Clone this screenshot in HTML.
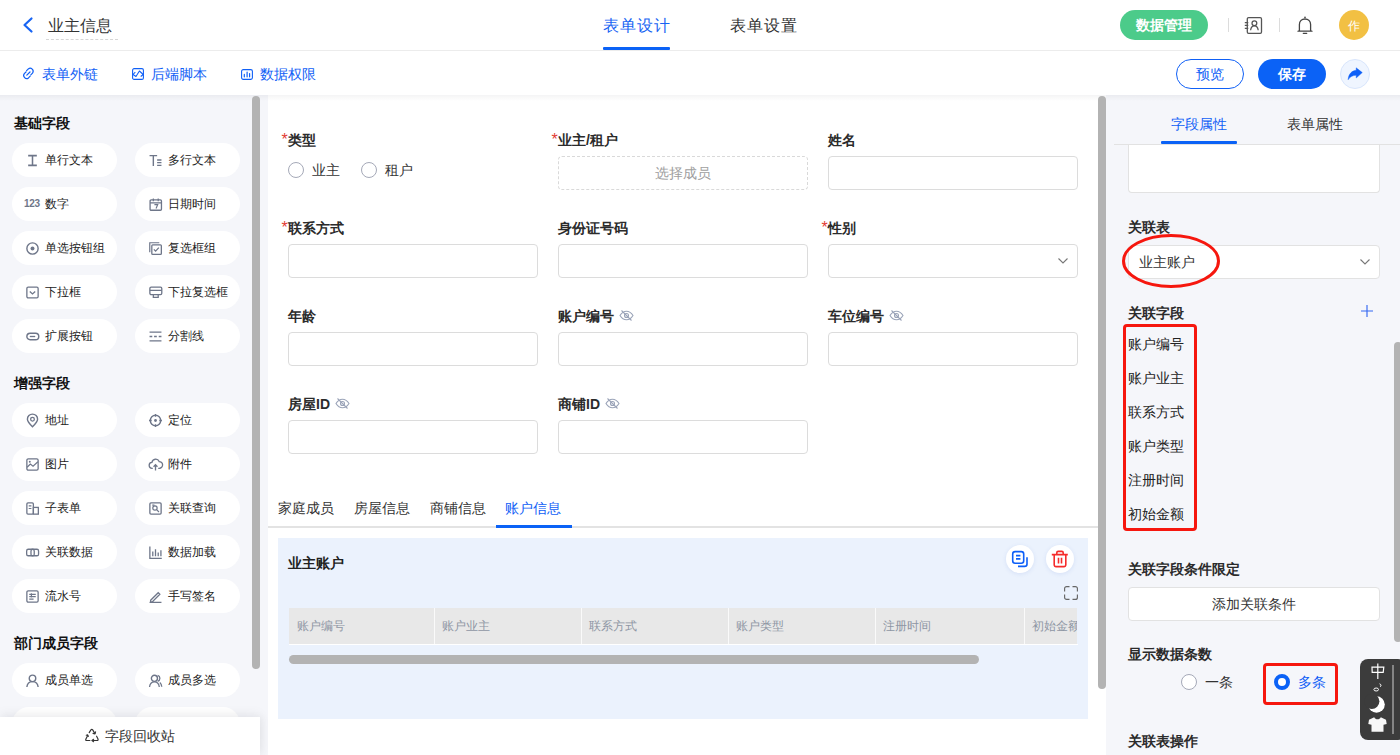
<!DOCTYPE html>
<html><head><meta charset="utf-8">
<style>
*{box-sizing:border-box;margin:0;padding:0}
html,body{width:1400px;height:755px;overflow:hidden;background:#fff;font-family:"Liberation Sans",sans-serif;color:#333}
.a{position:absolute}
.t{position:absolute;white-space:nowrap;line-height:1}
svg{position:absolute;overflow:visible}
/* header */
#hdr{left:0;top:0;width:1400px;height:51px;border-bottom:1px solid #ececec;background:#fff}
#tb{left:0;top:51px;width:1400px;height:44px;background:#fff}
#lp{left:0;top:95px;width:268px;height:660px;background:#f5f6fa}
#cv{left:268px;top:95px;width:838px;height:660px;background:#fff}
#rp{left:1106px;top:95px;width:294px;height:660px;background:#f5f6fa}
.shadow{left:0;top:95px;width:1400px;height:6px;background:linear-gradient(rgba(0,0,20,0.045),rgba(0,0,20,0))}
.sb{background:#b3b3b3;border-radius:4px}
.pill{position:absolute;width:105px;height:34px;border-radius:17px;background:#fff}
.pill .t{font-size:12px;color:#222;top:11px;left:33px}
.pill svg{left:14px;top:10px}
.sec{position:absolute;left:14px;font-size:14px;font-weight:bold;color:#111;line-height:1}
.lbl{position:absolute;font-size:14px;font-weight:bold;color:#2b2b2b;line-height:1;white-space:nowrap}
.lbl i{font-style:normal;color:#e23b33;font-weight:normal;position:absolute;left:-6.5px;top:-1px;font-size:16px}
.inp{position:absolute;width:250px;height:34px;border:1px solid #dcdcdc;border-radius:4px;background:#fff}
</style></head><body>
<div id="hdr" class="a"></div>
<div id="tb" class="a"></div>
<div id="lp" class="a"></div>
<div id="cv" class="a"></div>
<div id="rp" class="a"></div>
<div class="a shadow"></div>

<!-- HEADER -->
<svg style="left:22px;top:17px" width="12" height="16" viewBox="0 0 12 16"><path d="M9.5 1.5 L2.5 8 L9.5 14.5" fill="none" stroke="#1764f3" stroke-width="2.2" stroke-linecap="round" stroke-linejoin="round"/></svg>
<div class="t" style="left:48px;top:18px;font-size:16px;color:#333">业主信息</div>
<div class="a" style="left:46px;top:39px;width:72px;height:0;border-top:1px dashed #d6d6d6"></div>
<div class="t" style="left:603px;top:18px;font-size:16px;color:#1764f3;letter-spacing:1px">表单设计</div>
<div class="a" style="left:603px;top:47px;width:67px;height:3px;background:#0b62f6;border-radius:1px"></div>
<div class="t" style="left:730px;top:18px;font-size:16px;color:#333;letter-spacing:1px">表单设置</div>
<div class="a" style="left:1120px;top:10px;width:88px;height:30px;border-radius:15px;background:#4ccb8a"></div>
<div class="t" style="left:1136px;top:18px;font-size:14px;color:#fff;font-weight:bold">数据管理</div>
<div class="a" style="left:1228px;top:18px;width:1px;height:14px;background:#dcdcdc"></div>
<svg style="left:1244px;top:17px" width="19" height="17" viewBox="0 0 19 17"><rect x="3.3" y="0.6" width="14.2" height="15.8" rx="1.3" fill="none" stroke="#555" stroke-width="1.3"/><path d="M0.8 5.6h3.5M0.8 8.4h3.5M0.8 11.3h3.5" stroke="#555" stroke-width="1.2"/><circle cx="10.4" cy="6.2" r="2.4" fill="none" stroke="#555" stroke-width="1.25"/><path d="M6.6 13.2 C6.9 10.4 8.5 8.8 10.4 8.8 S13.9 10.4 14.2 13.2" fill="none" stroke="#555" stroke-width="1.25"/></svg>
<div class="a" style="left:1279px;top:18px;width:1px;height:14px;background:#dcdcdc"></div>
<svg style="left:1297px;top:16px" width="16" height="19" viewBox="0 0 16 19"><circle cx="8" cy="1.3" r="0.85" fill="#444"/><path d="M2.4 14.8 V8.6 C2.4 5.2 4.8 3 8 3 C11.2 3 13.6 5.2 13.6 8.6 V14.8 C14.2 14.9 14.8 15 15 15.2 H1 C1.2 15 1.8 14.9 2.4 14.8 Z" fill="none" stroke="#444" stroke-width="1.3" stroke-linejoin="round"/><path d="M6.3 17.3 H9.7" stroke="#444" stroke-width="1.3" stroke-linecap="round"/></svg>
<div class="a" style="left:1339px;top:10px;width:30px;height:30px;border-radius:50%;background:#f2c043"></div>
<div class="t" style="left:1348px;top:19.5px;font-size:12px;color:#fff">作</div>
<!-- LEFT PANEL -->
<div class="sec" style="top:116px">基础字段</div>
<div class="pill" style="left:12px;top:143px"><svg width="13" height="13" viewBox="0 0 12 12" style="left:13.5px;top:10.5px"><path d="M2 1.5h8M2 10.5h8M6 1.5v9" stroke="#6e7689" stroke-width="1.4" fill="none"/></svg><div class="t">单行文本</div></div>
<div class="pill" style="left:135px;top:143px"><svg width="13" height="13" viewBox="0 0 12 12" style="left:13.5px;top:10.5px"><path d="M0.5 1.5h7M4 1.5v9.5M7.5 5.5h4M7.5 8h4M7.5 10.5h4" stroke="#6e7689" stroke-width="1.3" fill="none"/></svg><div class="t">多行文本</div></div>
<div class="pill" style="left:12px;top:187px"><svg width="13" height="13" viewBox="0 0 12 12" style="left:13.5px;top:10.5px"></svg><div class="t">数字</div><div class="t" style="left:12px;top:11.5px;font-size:10px;font-weight:bold;color:#6e7689;font-family:'Liberation Sans',sans-serif;letter-spacing:-0.3px">123</div></div>
<div class="pill" style="left:135px;top:187px"><svg width="13" height="13" viewBox="0 0 12 12" style="left:13.5px;top:10.5px"><rect x="1" y="1.8" width="10.5" height="9.5" rx="1" fill="none" stroke="#6e7689" stroke-width="1.2"/><path d="M1 4.5h10.5M4 0.5v2.5M8.5 0.5v2.5M5 6.2h3l-1.5 3.5" stroke="#6e7689" stroke-width="1.1" fill="none"/></svg><div class="t">日期时间</div></div>
<div class="pill" style="left:12px;top:231px"><svg width="13" height="13" viewBox="0 0 12 12" style="left:13.5px;top:10.5px"><circle cx="6" cy="6" r="5.2" fill="none" stroke="#6e7689" stroke-width="1.3"/><circle cx="6" cy="6" r="1.8" fill="#6e7689"/></svg><div class="t">单选按钮组</div></div>
<div class="pill" style="left:135px;top:231px"><svg width="13" height="13" viewBox="0 0 12 12" style="left:13.5px;top:10.5px"><path d="M0.7 9.5V0.7h8.8" fill="none" stroke="#6e7689" stroke-width="1.1"/><rect x="2.6" y="2.6" width="8.8" height="8.8" rx="0.8" fill="none" stroke="#6e7689" stroke-width="1.2"/><path d="M4.5 6.8l1.6 1.6 3-3.2" fill="none" stroke="#6e7689" stroke-width="1.2"/></svg><div class="t">复选框组</div></div>
<div class="pill" style="left:12px;top:275px"><svg width="13" height="13" viewBox="0 0 12 12" style="left:13.5px;top:10.5px"><rect x="0.8" y="1" width="10.4" height="10" rx="1.2" fill="none" stroke="#6e7689" stroke-width="1.2"/><path d="M3.5 5l2.5 2.3 2.5-2.3" fill="none" stroke="#6e7689" stroke-width="1.2"/></svg><div class="t">下拉框</div></div>
<div class="pill" style="left:135px;top:275px"><svg width="13" height="13" viewBox="0 0 12 12" style="left:13.5px;top:10.5px"><rect x="0.8" y="1" width="11" height="7" rx="1.2" fill="none" stroke="#6e7689" stroke-width="1.2"/><path d="M0.8 4h11M4 8v2.5h4.5V8" fill="none" stroke="#6e7689" stroke-width="1.2"/></svg><div class="t">下拉复选框</div></div>
<div class="pill" style="left:12px;top:319px"><svg width="13" height="13" viewBox="0 0 12 12" style="left:13.5px;top:10.5px"><rect x="0.8" y="3" width="11" height="6" rx="3" fill="none" stroke="#6e7689" stroke-width="1.3"/><path d="M3.5 6h5" stroke="#6e7689" stroke-width="1.2"/></svg><div class="t">扩展按钮</div></div>
<div class="pill" style="left:135px;top:319px"><svg width="13" height="13" viewBox="0 0 12 12" style="left:13.5px;top:10.5px"><path d="M0.5 2h11M0.5 6h2.5M4.7 6h2.5M9 6h2.5M0.5 10h11" stroke="#6e7689" stroke-width="1.2" fill="none"/></svg><div class="t">分割线</div></div>
<div class="sec" style="top:376px">增强字段</div>
<div class="pill" style="left:12px;top:403px"><svg width="13" height="13" viewBox="0 0 12 12" style="left:13.5px;top:10.5px"><path d="M6 11.8C3 8.8 1.3 6.6 1.3 4.8a4.7 4.7 0 0 1 9.4 0c0 1.8-1.7 4-4.7 7z" fill="none" stroke="#6e7689" stroke-width="1.3"/><circle cx="6" cy="4.8" r="1.7" fill="none" stroke="#6e7689" stroke-width="1.2"/></svg><div class="t">地址</div></div>
<div class="pill" style="left:135px;top:403px"><svg width="13" height="13" viewBox="0 0 12 12" style="left:13.5px;top:10.5px"><circle cx="6" cy="6" r="4.8" fill="none" stroke="#6e7689" stroke-width="1.3"/><circle cx="6" cy="6" r="1.3" fill="#6e7689"/><path d="M6 0v2.5M6 9.5V12M0 6h2.5M9.5 6H12" stroke="#6e7689" stroke-width="1.2"/></svg><div class="t">定位</div></div>
<div class="pill" style="left:12px;top:447px"><svg width="13" height="13" viewBox="0 0 12 12" style="left:13.5px;top:10.5px"><rect x="0.8" y="0.8" width="10.4" height="10.4" rx="1.3" fill="none" stroke="#6e7689" stroke-width="1.2"/><path d="M1 8.5l3-3 2.5 2 4.5-4" fill="none" stroke="#6e7689" stroke-width="1.1"/><circle cx="3.5" cy="3.5" r=".9" fill="#6e7689"/></svg><div class="t">图片</div></div>
<div class="pill" style="left:135px;top:447px"><svg width="13" height="13" viewBox="0 0 12 12" style="left:13.5px;top:10.5px"><path d="M3.5 9.5H3a2.7 2.7 0 0 1-.3-5.4A3.5 3.5 0 0 1 9.4 3.3 2.6 2.6 0 0 1 9.5 9.5H8.5" fill="none" stroke="#6e7689" stroke-width="1.2"/><path d="M6 11.5V6.2M4.2 8l1.8-1.8L7.8 8" fill="none" stroke="#6e7689" stroke-width="1.2"/></svg><div class="t">附件</div></div>
<div class="pill" style="left:12px;top:491px"><svg width="13" height="13" viewBox="0 0 12 12" style="left:13.5px;top:10.5px"><rect x="0.8" y="0.8" width="6" height="10.4" rx="1" fill="none" stroke="#6e7689" stroke-width="1.2"/><rect x="6.8" y="5" width="4.6" height="6.2" fill="none" stroke="#6e7689" stroke-width="1.2"/><path d="M2.5 3.5h2.5M2.5 6h2.5" stroke="#6e7689" stroke-width="1.1"/></svg><div class="t">子表单</div></div>
<div class="pill" style="left:135px;top:491px"><svg width="13" height="13" viewBox="0 0 12 12" style="left:13.5px;top:10.5px"><rect x="0.8" y="0.8" width="10.4" height="10.4" rx="1" fill="none" stroke="#6e7689" stroke-width="1.2"/><circle cx="5.5" cy="5.5" r="2" fill="none" stroke="#6e7689" stroke-width="1.1"/><path d="M7 7l2.2 2.2M3 2.8h2" stroke="#6e7689" stroke-width="1.1"/></svg><div class="t">关联查询</div></div>
<div class="pill" style="left:12px;top:535px"><svg width="13" height="13" viewBox="0 0 12 12" style="left:13.5px;top:10.5px"><rect x="0.6" y="3" width="7" height="6" rx="1.5" fill="none" stroke="#6e7689" stroke-width="1.2"/><rect x="4.6" y="3" width="7" height="6" rx="1.5" fill="none" stroke="#6e7689" stroke-width="1.2"/></svg><div class="t">关联数据</div></div>
<div class="pill" style="left:135px;top:535px"><svg width="13" height="13" viewBox="0 0 12 12" style="left:13.5px;top:10.5px"><path d="M0.8 0.5v11h11M3.5 9.5V5M6 9.5V3M8.5 9.5V6M11 9.5V4" stroke="#6e7689" stroke-width="1.2" fill="none"/></svg><div class="t">数据加载</div></div>
<div class="pill" style="left:12px;top:579px"><svg width="13" height="13" viewBox="0 0 12 12" style="left:13.5px;top:10.5px"><rect x="0.8" y="0.8" width="10.4" height="10.4" rx="1.2" fill="none" stroke="#6e7689" stroke-width="1.2"/><path d="M3 4h6M3 6.2h6M3 8.4h4M5 3v4" stroke="#6e7689" stroke-width="1.1" fill="none"/></svg><div class="t">流水号</div></div>
<div class="pill" style="left:135px;top:579px"><svg width="13" height="13" viewBox="0 0 12 12" style="left:13.5px;top:10.5px"><path d="M1.5 9.5L8.5 2.5l1.5 1.5-7 7H1.5zM0.5 11.5h11" stroke="#6e7689" stroke-width="1.2" fill="none"/></svg><div class="t">手写签名</div></div>
<div class="sec" style="top:636px">部门成员字段</div>
<div class="pill" style="left:12px;top:663px"><svg width="13" height="13" viewBox="0 0 12 12" style="left:13.5px;top:10.5px"><circle cx="6" cy="4" r="3" fill="none" stroke="#6e7689" stroke-width="1.3"/><path d="M0.8 12c.3-3.2 2.4-5 5.2-5s4.9 1.8 5.2 5" fill="none" stroke="#6e7689" stroke-width="1.3"/></svg><div class="t">成员单选</div></div>
<div class="pill" style="left:135px;top:663px"><svg width="13" height="13" viewBox="0 0 12 12" style="left:13.5px;top:10.5px"><circle cx="5" cy="4" r="2.8" fill="none" stroke="#6e7689" stroke-width="1.3"/><path d="M0.5 12c.3-3 2-4.7 4.5-4.7s4.2 1.7 4.5 4.7M8 1.3a2.8 2.8 0 0 1 0 5.4M10 7.8c1 .8 1.6 2.2 1.8 4" fill="none" stroke="#6e7689" stroke-width="1.2"/></svg><div class="t">成员多选</div></div>
<div class="pill" style="left:12px;top:707px"><svg width="13" height="13" viewBox="0 0 12 12" style="left:13.5px;top:10.5px"></svg><div class="t">部门单选</div></div>
<div class="pill" style="left:135px;top:707px"><svg width="13" height="13" viewBox="0 0 12 12" style="left:13.5px;top:10.5px"></svg><div class="t">部门多选</div></div>
<div class="a sb" style="left:252px;top:96px;width:8px;height:573px"></div>
<div class="a" style="left:0;top:717px;width:260px;height:38px;background:#fff;box-shadow:0 -3px 12px rgba(0,0,30,0.06),3px 0 8px rgba(0,0,30,0.04)"></div>
<svg style="left:85px;top:729px" width="14" height="13" viewBox="0 0 14 13"><path d="M4.2 3.6 L5.9 0.9 Q6.8 -0.2 7.7 0.9 L9.8 4.4 M11.6 7.2 L13 10 Q13.5 11.5 12 11.5 H7.2 M4.9 11.5 H1.8 Q0.2 11.5 0.9 10 L2.7 6.4" fill="none" stroke="#333" stroke-width="1.15" stroke-linecap="round"/><path d="M10.6 2.8 L10 4.9 L8 4.4 M8.6 10.3 L7 11.5 L8.6 12.7 M1.3 6.3 L2.7 5.9 L3.3 7.5" fill="none" stroke="#333" stroke-width="1.1" stroke-linecap="round" stroke-linejoin="round"/></svg>
<div class="t" style="left:105px;top:729px;font-size:14px;color:#333">字段回收站</div>
<!-- CANVAS -->
<div class="lbl" style="left:288px;top:133px"><i>*</i>类型</div>
<div class="lbl" style="left:558px;top:133px"><i>*</i>业主/租户</div>
<div class="lbl" style="left:828px;top:133px">姓名</div>
<div class="a" style="left:288px;top:162px;width:16px;height:16px;border-radius:50%;border:1px solid #a5a9b8;background:#fff"></div>
<div class="t" style="left:312px;top:163px;font-size:14px;color:#333">业主</div>
<div class="a" style="left:361px;top:162px;width:16px;height:16px;border-radius:50%;border:1px solid #a5a9b8;background:#fff"></div>
<div class="t" style="left:385px;top:163px;font-size:14px;color:#333">租户</div>
<div class="a" style="left:558px;top:156px;width:250px;height:34px;border:1px dashed #d9d9d9;border-radius:4px"></div>
<div class="t" style="left:655px;top:166px;font-size:14px;color:#a0a0a0">选择成员</div>
<div class="inp" style="left:828px;top:156px"></div>
<div class="lbl" style="left:288px;top:221px"><i>*</i>联系方式</div>
<div class="lbl" style="left:558px;top:221px">身份证号码</div>
<div class="lbl" style="left:828px;top:221px"><i>*</i>性别</div>
<div class="inp" style="left:288px;top:244px"></div>
<div class="inp" style="left:558px;top:244px"></div>
<div class="inp" style="left:828px;top:244px"></div>
<svg style="left:1058px;top:258px" width="10" height="6" viewBox="0 0 10 6"><path d="M.5 .5L5 5 9.5 .5" fill="none" stroke="#777" stroke-width="1.1"/></svg>
<div class="lbl" style="left:288px;top:309px">年龄</div>
<div class="lbl" style="left:558px;top:309px">账户编号</div>
<svg style="left:619px;top:310px" width="15" height="11" viewBox="0 0 15 11"><path d="M1 5.5C2.8 2.6 5 1.2 7.5 1.2S12.2 2.6 14 5.5C12.2 8.4 10 9.8 7.5 9.8S2.8 8.4 1 5.5z" fill="none" stroke="#9aa3b8" stroke-width="1.1"/><circle cx="7.5" cy="5.5" r="2" fill="none" stroke="#9aa3b8" stroke-width="1.1"/><path d="M2.5 0.5L12.5 10.5" stroke="#9aa3b8" stroke-width="1.1"/></svg>
<div class="lbl" style="left:828px;top:309px">车位编号</div>
<svg style="left:889px;top:310px" width="15" height="11" viewBox="0 0 15 11"><path d="M1 5.5C2.8 2.6 5 1.2 7.5 1.2S12.2 2.6 14 5.5C12.2 8.4 10 9.8 7.5 9.8S2.8 8.4 1 5.5z" fill="none" stroke="#9aa3b8" stroke-width="1.1"/><circle cx="7.5" cy="5.5" r="2" fill="none" stroke="#9aa3b8" stroke-width="1.1"/><path d="M2.5 0.5L12.5 10.5" stroke="#9aa3b8" stroke-width="1.1"/></svg>
<div class="inp" style="left:288px;top:332px"></div>
<div class="inp" style="left:558px;top:332px"></div>
<div class="inp" style="left:828px;top:332px"></div>
<div class="lbl" style="left:288px;top:397px">房屋ID</div>
<svg style="left:335px;top:398px" width="15" height="11" viewBox="0 0 15 11"><path d="M1 5.5C2.8 2.6 5 1.2 7.5 1.2S12.2 2.6 14 5.5C12.2 8.4 10 9.8 7.5 9.8S2.8 8.4 1 5.5z" fill="none" stroke="#9aa3b8" stroke-width="1.1"/><circle cx="7.5" cy="5.5" r="2" fill="none" stroke="#9aa3b8" stroke-width="1.1"/><path d="M2.5 0.5L12.5 10.5" stroke="#9aa3b8" stroke-width="1.1"/></svg>
<div class="lbl" style="left:558px;top:397px">商铺ID</div>
<svg style="left:605px;top:398px" width="15" height="11" viewBox="0 0 15 11"><path d="M1 5.5C2.8 2.6 5 1.2 7.5 1.2S12.2 2.6 14 5.5C12.2 8.4 10 9.8 7.5 9.8S2.8 8.4 1 5.5z" fill="none" stroke="#9aa3b8" stroke-width="1.1"/><circle cx="7.5" cy="5.5" r="2" fill="none" stroke="#9aa3b8" stroke-width="1.1"/><path d="M2.5 0.5L12.5 10.5" stroke="#9aa3b8" stroke-width="1.1"/></svg>
<div class="inp" style="left:288px;top:420px"></div>
<div class="inp" style="left:558px;top:420px"></div>
<div class="t" style="left:278px;top:501px;font-size:14px;color:#333">家庭成员</div>
<div class="t" style="left:354px;top:501px;font-size:14px;color:#333">房屋信息</div>
<div class="t" style="left:430px;top:501px;font-size:14px;color:#333">商铺信息</div>
<div class="t" style="left:505px;top:501px;font-size:14px;color:#1060f6">账户信息</div>
<div class="a" style="left:268px;top:526px;width:830px;height:2px;background:#e3e3e3"></div>
<div class="a" style="left:496px;top:525px;width:76px;height:3px;background:#0b62f6"></div>
<div class="a" style="left:278px;top:538px;width:810px;height:181px;background:#ebf2fd"></div>
<div class="t" style="left:288px;top:556px;font-size:14px;font-weight:bold;color:#222">业主账户</div>
<div class="a" style="left:1006px;top:545px;width:28px;height:28px;border-radius:50%;background:#fff;box-shadow:0 1px 4px rgba(60,100,200,0.12)"></div>
<svg style="left:1011px;top:550px" width="18" height="18" viewBox="0 0 18 18"><rect x="1.7" y="1.6" width="11" height="11.6" rx="2.4" fill="none" stroke="#0d5ff8" stroke-width="1.6"/><path d="M5 5.6h4.4M5 8.8h4.4" stroke="#0d5ff8" stroke-width="1.7"/><path d="M16 7.2v6.8a2.4 2.4 0 0 1-2.4 2.4H7" fill="none" stroke="#0d5ff8" stroke-width="1.6"/></svg>
<div class="a" style="left:1046px;top:545px;width:28px;height:28px;border-radius:50%;background:#fff;box-shadow:0 1px 4px rgba(60,100,200,0.12)"></div>
<svg style="left:1051px;top:550px" width="18" height="18" viewBox="0 0 18 18"><path d="M0.8 4.6h16M5.8 4.4V2.8a1.4 1.4 0 0 1 1.4-1.4h3.6a1.4 1.4 0 0 1 1.4 1.4v1.6M3.2 4.8v10a1.8 1.8 0 0 0 1.8 1.8h8a1.8 1.8 0 0 0 1.8-1.8v-10M7.5 7.8v5.6M10.5 7.8v5.6" fill="none" stroke="#f52b2b" stroke-width="1.6"/></svg>
<svg style="left:1064px;top:586px" width="14" height="14" viewBox="0 0 14 14"><path d="M0.6 5.5V2.6A2 2 0 0 1 2.6 .6h2.9M8.5 .6h2.9a2 2 0 0 1 2 2v2.9M13.4 8.5v2.9a2 2 0 0 1-2 2H8.5M5.5 13.4H2.6a2 2 0 0 1-2-2V8.5" fill="none" stroke="#666" stroke-width="1.15"/></svg>
<div class="a" style="left:289px;top:608px;width:788px;height:36px;background:#e8e8e8;overflow:hidden">
<div class="t" style="left:8px;top:12px;font-size:12px;color:#8e96a4">账户编号</div>
<div class="a" style="left:145px;top:0;width:1px;height:36px;background:#fafafa"></div>
<div class="t" style="left:153px;top:12px;font-size:12px;color:#8e96a4">账户业主</div>
<div class="a" style="left:292px;top:0;width:1px;height:36px;background:#fafafa"></div>
<div class="t" style="left:300px;top:12px;font-size:12px;color:#8e96a4">联系方式</div>
<div class="a" style="left:439px;top:0;width:1px;height:36px;background:#fafafa"></div>
<div class="t" style="left:447px;top:12px;font-size:12px;color:#8e96a4">账户类型</div>
<div class="a" style="left:586px;top:0;width:1px;height:36px;background:#fafafa"></div>
<div class="t" style="left:594px;top:12px;font-size:12px;color:#8e96a4">注册时间</div>
<div class="a" style="left:735px;top:0;width:1px;height:36px;background:#fafafa"></div>
<div class="t" style="left:743px;top:12px;font-size:12px;color:#8e96a4">初始金额</div>
</div>
<div class="a" style="left:289px;top:644px;width:789px;height:1px;background:#fff"></div>
<div class="a" style="left:289px;top:655px;width:690px;height:9px;border-radius:5px;background:#b3b3b3"></div>
<div class="a sb" style="left:1098px;top:96px;width:8px;height:593px"></div>
<!-- RIGHT -->
<div class="t" style="left:1171px;top:117px;font-size:14px;color:#1060f6">字段属性</div>
<div class="t" style="left:1287px;top:117px;font-size:14px;color:#333">表单属性</div>
<div class="a" style="left:1128px;top:144px;width:252px;height:49px;background:#fff;border:1px solid #e2e2e2;border-top:none;border-radius:0 0 4px 4px"></div>
<div class="a" style="left:1114px;top:144px;width:286px;height:1px;background:#e2e2e2"></div>
<div class="a" style="left:1161px;top:141px;width:76px;height:3px;background:#0b62f6;border-radius:1px"></div>
<div class="lbl" style="left:1128px;top:220px">关联表</div>
<div class="a" style="left:1128px;top:245px;width:252px;height:34px;background:#fff;border:1px solid #e2e2e2;border-radius:4px"></div>
<div class="t" style="left:1139px;top:255px;font-size:14px;color:#333">业主账户</div>
<svg style="left:1360px;top:259px" width="10" height="6" viewBox="0 0 10 6"><path d="M.5 .5L5 5 9.5 .5" fill="none" stroke="#777" stroke-width="1.1"/></svg>
<svg style="left:1121px;top:233px" width="100" height="56" viewBox="0 0 100 56"><ellipse cx="50" cy="28" rx="47.5" ry="25.5" fill="none" stroke="#f6170e" stroke-width="3"/></svg>
<div class="lbl" style="left:1128px;top:306px">关联字段</div>
<svg style="left:1361px;top:305px" width="12" height="12" viewBox="0 0 12 12"><path d="M6 0v12M0 6h12" stroke="#3468f2" stroke-width="1.15"/></svg>
<div class="t" style="left:1128px;top:337px;font-size:14px;color:#222">账户编号</div>
<div class="t" style="left:1128px;top:371px;font-size:14px;color:#222">账户业主</div>
<div class="t" style="left:1128px;top:405px;font-size:14px;color:#222">联系方式</div>
<div class="t" style="left:1128px;top:439px;font-size:14px;color:#222">账户类型</div>
<div class="t" style="left:1128px;top:473px;font-size:14px;color:#222">注册时间</div>
<div class="t" style="left:1128px;top:507px;font-size:14px;color:#222">初始金额</div>
<div class="a" style="left:1123px;top:324px;width:74px;height:207px;border:3px solid #f6170e;border-radius:4px"></div>
<div class="lbl" style="left:1128px;top:562px">关联字段条件限定</div>
<div class="a" style="left:1128px;top:587px;width:252px;height:34px;background:#fff;border:1px solid #e2e2e2;border-radius:4px"></div>
<div class="t" style="left:1212px;top:597px;font-size:14px;color:#333">添加关联条件</div>
<div class="lbl" style="left:1128px;top:647px">显示数据条数</div>
<div class="a" style="left:1181px;top:674px;width:16px;height:16px;border-radius:50%;border:1px solid #a5a9b8;background:#fff"></div>
<div class="t" style="left:1205px;top:675px;font-size:14px;color:#333">一条</div>
<div class="a" style="left:1274px;top:674px;width:16px;height:16px;border-radius:50%;border:4.5px solid #0b62f6;background:#fff"></div>
<div class="t" style="left:1298px;top:675px;font-size:14px;color:#1060f6">多条</div>
<div class="a" style="left:1263px;top:663px;width:75px;height:42px;border:3px solid #f6170e;border-radius:4px"></div>
<div class="lbl" style="left:1128px;top:734px">关联表操作</div>
<div class="a sb" style="left:1394px;top:342px;width:8px;height:300px"></div>
<div class="a" style="left:1360px;top:659px;width:46px;height:81px;border-radius:8px;background:#3c3c3c"></div>
<svg style="left:1371px;top:663px" width="14" height="17" viewBox="0 0 14 17"><path d="M1 4.2 H12.8 L12.2 9.3 H1.2 Z M6.8 0.6 V16" fill="none" stroke="#fff" stroke-width="1.2"/></svg>
<svg style="left:1373px;top:683px" width="10" height="9" viewBox="0 0 10 9"><ellipse cx="3.2" cy="6.5" rx="2.3" ry="1.5" fill="none" stroke="#fff" stroke-width="1"/><path d="M6.5 0.8 C8.2 1.2 8.5 3 7.2 3.8" fill="none" stroke="#fff" stroke-width="1"/></svg>
<svg style="left:1368px;top:695px" width="18" height="19" viewBox="0 0 18 19"><circle cx="8.5" cy="9.5" r="8.3" fill="#fff"/><circle cx="3.8" cy="6.3" r="7.6" fill="#3c3c3c"/></svg>
<svg style="left:1368px;top:717px" width="19" height="15" viewBox="0 0 19 15"><path d="M6.2 0.3 L1 2.8 L0.3 7 L3.5 7.8 V14.8 H15.5 V7.8 L18.7 7 L18 2.8 L12.8 0.3 C12 1.8 11 2.3 9.5 2.3 S7 1.8 6.2 0.3 Z" fill="#f7f7f7"/></svg>
<div class="a" style="left:1392px;top:665px;width:2px;height:69px;background:#858585"></div>
<!-- TOOLBAR -->
<svg style="left:22px;top:67px" width="13" height="13" viewBox="0 0 13 13"><path d="M4.6 3.6 L6.3 1.9 a3 3 0 0 1 4.2 4.2 L8.8 7.8 M8.2 9.2 L6.5 10.9 a3 3 0 0 1 -4.2 -4.2 L4 5" fill="none" stroke="#1060f6" stroke-width="1.2" stroke-linecap="round"/><path d="M4.8 8.2 L8 5" stroke="#1060f6" stroke-width="1.2" stroke-linecap="round"/></svg>
<div class="t" style="left:42px;top:67px;font-size:14px;color:#1060f6">表单外链</div>
<svg style="left:132px;top:68px" width="12" height="12" viewBox="0 0 12 12"><rect x=".6" y=".6" width="10.8" height="10.8" rx="1.5" fill="none" stroke="#1060f6" stroke-width="1.1"/><path d="M3.3 4.2 L1 6.5 L4 8.5 L7.4 3 L11.2 6.5 L8.7 8.5" fill="none" stroke="#1060f6" stroke-width="1.05" stroke-linejoin="round"/></svg>
<div class="t" style="left:151px;top:67px;font-size:14px;color:#1060f6">后端脚本</div>
<svg style="left:241px;top:69px" width="12" height="11" viewBox="0 0 12 11"><rect x=".6" y=".6" width="10.8" height="9.8" rx="1.6" fill="none" stroke="#1060f6" stroke-width="1.1"/><path d="M3.3 5.4 V7.8 M6.1 3.1 V7.8 M8.6 4.5 V7.8" fill="none" stroke="#1060f6" stroke-width="1.2" stroke-linecap="round"/></svg>
<div class="t" style="left:260px;top:67px;font-size:14px;color:#1060f6">数据权限</div>
<div class="a" style="left:1176px;top:59px;width:68px;height:30px;border-radius:15px;border:1px solid #1060f6;background:#fff"></div>
<div class="t" style="left:1196px;top:67px;font-size:14px;color:#1060f6">预览</div>
<div class="a" style="left:1258px;top:59px;width:68px;height:30px;border-radius:15px;background:#0b62f6"></div>
<div class="t" style="left:1278px;top:67px;font-size:14px;color:#fff;font-weight:bold">保存</div>
<div class="a" style="left:1340px;top:59px;width:30px;height:30px;border-radius:50%;border:1px solid #d9e6fc;background:#eff5ff"></div>
<svg style="left:1346px;top:66px" width="18" height="16" viewBox="0 0 18 16"><path d="M10.2 1.8 L16.3 6.6 L10.2 12 V9.3 C6.5 9.3 3.9 10.9 2.1 13.8 C2.5 8 5.9 4.6 10.2 4.3 Z" fill="#0d5ff8" stroke="#0d5ff8" stroke-width="0.4" stroke-linejoin="round"/></svg>

</body></html>
